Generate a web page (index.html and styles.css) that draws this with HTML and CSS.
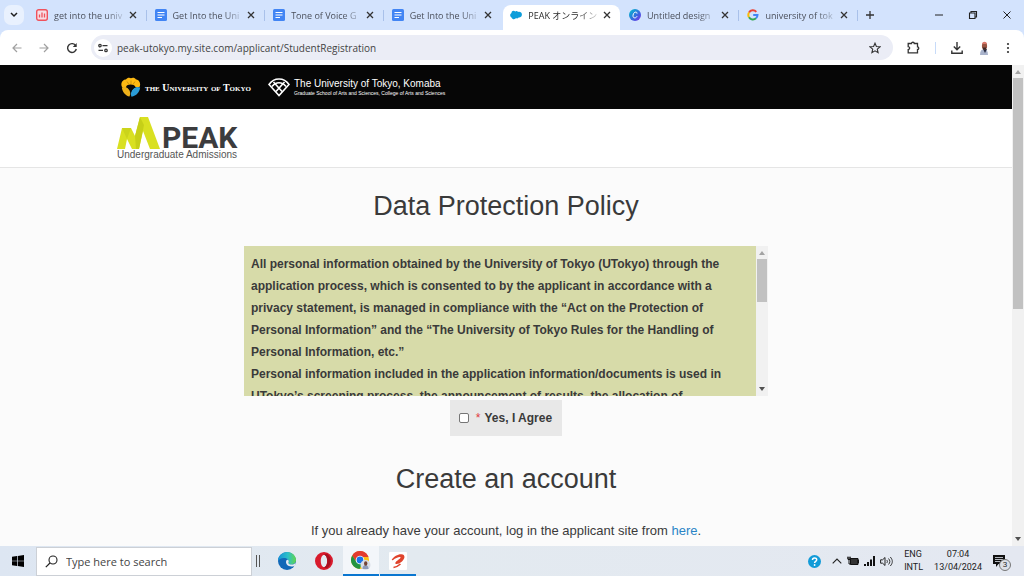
FILE: index.html
```html
<!DOCTYPE html>
<html lang="en">
<head>
    <meta charset="UTF-8">
    <meta name="viewport" content="width=device-width, initial-scale=1.0">
    <title>PEAK Student Registration</title>
    <link rel="stylesheet" href="styles.css">
</head>
<body>
    <!-- Shared shapes -->
    <svg class="sprite" aria-hidden="true">
        <symbol id="close" viewBox="0 0 8 8"><path d="M1 1l6 6M7 1l-6 6" fill="none" stroke="currentColor" stroke-width="1.3"/></symbol>
        <symbol id="doc" viewBox="0 0 12 12"><rect width="12" height="12" rx="1.5" fill="#4285f4"/><path d="M2.500 3.500h7M2.500 6h7M2.500 8.500h4.500" stroke="#fff" stroke-width="1.2"/></symbol>
        <symbol id="up" viewBox="0 0 6 4"><path d="M0 4L3 0l3 4z" fill="currentColor"/></symbol>
        <symbol id="down" viewBox="0 0 6 4"><path d="M0 0l3 4 3-4z" fill="currentColor"/></symbol>
    </svg>

    <!-- Tab strip -->
    <div class="tab-strip">
        <button class="tab-search" aria-label="Search tabs">
            <svg width="8" height="6" viewBox="0 0 8 6"><path d="M1 1l3 3 3-3" fill="none" stroke="#1f1f1f" stroke-width="1.5"/></svg>
        </button>
        <div class="tabs">
            <div class="tab">
                <svg class="favicon" viewBox="0 0 12 12"><rect x=".7" y=".7" width="10.600" height="10.600" rx="2" fill="#f6dfe6" stroke="#f0525c" stroke-width="1.4"/><path d="M3.500 8.500v-3M6 8.500v-5M8.500 8.500v-4" stroke="#f0525c" stroke-width="1.3"/></svg>
                <span class="tab-title">get into the univ</span>
                <button class="tab-close" aria-label="Close tab"><svg width="8" height="8"><use href="#close"/></svg></button>
            </div>
            <div class="tab">
                <svg class="favicon"><use href="#doc"/></svg>
                <span class="tab-title">Get Into the Uni</span>
                <button class="tab-close" aria-label="Close tab"><svg width="8" height="8"><use href="#close"/></svg></button>
            </div>
            <div class="tab">
                <svg class="favicon"><use href="#doc"/></svg>
                <span class="tab-title">Tone of Voice G</span>
                <button class="tab-close" aria-label="Close tab"><svg width="8" height="8"><use href="#close"/></svg></button>
            </div>
            <div class="tab before-active">
                <svg class="favicon"><use href="#doc"/></svg>
                <span class="tab-title">Get Into the Uni</span>
                <button class="tab-close" aria-label="Close tab"><svg width="8" height="8"><use href="#close"/></svg></button>
            </div>
            <div class="tab active">
                <svg class="favicon" viewBox="0 0 12 12"><path d="M1.500 8.500C-.3 7.500-.2 4.800 1.500 4 1.300 1.800 4 1 5.200 2.600 6.200 1.500 7.600 1.900 8 3c2-.7 4 .6 3.900 2.700-.1 2-1.700 3-3.300 2.700-.6 1.100-1.900 1.200-2.600.7C5 10.900 2.200 10.500 1.500 8.500z" fill="#0d9dda"/></svg>
                <span class="tab-title">PEAK オンライン申</span>
                <button class="tab-close" aria-label="Close tab"><svg width="8" height="8"><use href="#close"/></svg></button>
            </div>
            <div class="tab">
                <svg class="favicon" viewBox="0 0 12 12"><defs><linearGradient id="canva" x1="0" y1="0" x2="1" y2="1"><stop offset="0" stop-color="#00c4cc"/><stop offset=".5" stop-color="#2e74dd"/><stop offset="1" stop-color="#7d2ae8"/></linearGradient></defs><circle cx="6" cy="6" r="6" fill="url(#canva)"/><path d="M8 4.600C8.300 2.500 5.500 2.600 4.500 4.700c-1 2-.5 4.200 1.200 4.200 1 0 1.900-.7 2.400-1.600" fill="none" stroke="#fff"/></svg>
                <span class="tab-title">Untitled design</span>
                <button class="tab-close" aria-label="Close tab"><svg width="8" height="8"><use href="#close"/></svg></button>
            </div>
            <div class="tab">
                <svg class="favicon" viewBox="0 0 12 12"><g fill="none" stroke-width="2"><path d="M2 3.600A4.500 4.500 0 0 1 9.300 2.900" stroke="#ea4335"/><path d="M2 8.200a4.500 4.500 0 0 1 0-4.600" stroke="#fbbc05"/><path d="M9 9.300a4.500 4.500 0 0 1-7-1.100" stroke="#34a853"/><path d="M6.200 6h4.300a4.500 4.500 0 0 1-1.500 3.300" stroke="#4285f4"/></g></svg>
                <span class="tab-title">university of tok</span>
                <button class="tab-close" aria-label="Close tab"><svg width="8" height="8"><use href="#close"/></svg></button>
            </div>
        </div>
        <button class="new-tab" aria-label="New tab"><svg width="8" height="8" viewBox="0 0 8 8"><path d="M4 0v8M0 4h8" stroke="#333" stroke-width="1.300"/></svg></button>
        <div class="window-controls">
            <button aria-label="Minimize"><svg width="10" height="10" viewBox="0 0 10 10"><path d="M1 5h8" stroke="#222"/></svg></button>
            <button aria-label="Restore"><svg width="10" height="10" viewBox="0 0 10 10"><path d="M1.500 3h5.500v5.500H1.500zM3 3V1.500h5.500V7H7" fill="none" stroke="#222" stroke-width="1.100"/></svg></button>
            <button aria-label="Close"><svg width="10" height="10" viewBox="0 0 10 10"><path d="M1.500 1.500l7 7M8.500 1.500l-7 7" stroke="#222"/></svg></button>
        </div>
    </div>

    <!-- Toolbar -->
    <div class="toolbar">
        <div class="nav-buttons">
            <button aria-label="Back"><svg width="10" height="10" viewBox="0 0 10 10"><path d="M9.500 5H1M5 1L1 5l4 4" fill="none" stroke="#a0a0a0" stroke-width="1.200"/></svg></button>
            <button aria-label="Forward"><svg width="10" height="10" viewBox="0 0 10 10"><path d="M.5 5H9M5 1l4 4-4 4" fill="none" stroke="#a0a0a0" stroke-width="1.200"/></svg></button>
            <button aria-label="Reload"><svg width="12" height="12" viewBox="0 0 12 12"><path d="M9.800 3.800A4.400 4.400 0 1 0 10.300 7" fill="none" stroke="#333" stroke-width="1.400"/><path d="M10.700 1v4H6.800z" fill="#333"/></svg></button>
        </div>
        <div class="omnibox">
            <button class="site-info" aria-label="Site information"><svg width="10" height="10" viewBox="0 0 10 10"><g fill="none" stroke="#333" stroke-width="1.300"><circle cx="2" cy="2.600" r="1.200"/><path d="M4.500 2.600H9.500M.5 7.400h4.500"/><circle cx="8" cy="7.400" r="1.200"/></g></svg></button>
            <input class="url" type="text" aria-label="Address" value="peak-utokyo.my.site.com/applicant/StudentRegistration">
            <button class="star" aria-label="Bookmark"><svg width="12" height="12" viewBox="0 0 12 12"><path d="M6 1.200l1.400 3.300 3.600.3-2.700 2.400.8 3.500L6 8.800l-3.100 1.900.8-3.500L1 4.800l3.600-.3z" fill="none" stroke="#333" stroke-width="1.100"/></svg></button>
        </div>
        <div class="toolbar-actions">
            <button aria-label="Extensions"><svg width="13" height="13" viewBox="0 0 13 13"><path d="M1.200 2.500h3.300C4.500.8 7.300.8 7.300 2.500h3.200v3.300c1.700 0 1.700 2.700 0 2.700v3.300H1.200V8.600c2-.2 2-2.800 0-3z" fill="none" stroke="#333" stroke-width="1.300"/></svg></button>
            <span class="toolbar-divider"></span>
            <button aria-label="Downloads"><svg width="12" height="12" viewBox="0 0 12 12"><path d="M6 0v7.500M2.800 4.500L6 7.700l3.200-3.200M.8 8.500v2.700h10.400V8.500" fill="none" stroke="#333" stroke-width="1.400"/></svg></button>
            <button aria-label="Profile"><svg width="14" height="14" viewBox="0 0 14 14"><path d="M3 14c0-4 1.500-6 4-6s4 2 4 6z" fill="#a9b3cb"/><path d="M6 8l2 4 2-4z" fill="#24283c"/><ellipse cx="7.500" cy="5" rx="2.600" ry="3.600" fill="#9a5542"/><path d="M5 3c.3-3 4.700-3 5 0z" fill="#d9776a"/><path d="M5.500 6.500h4l-1 2h-2z" fill="#3a2826"/></svg></button>
            <button aria-label="Menu"><svg width="4" height="12" viewBox="0 0 4 12"><g fill="#333"><circle cx="2" cy="2" r="1.100"/><circle cx="2" cy="6" r="1.100"/><circle cx="2" cy="10" r="1.100"/></g></svg></button>
        </div>
    </div>

    <!-- Page -->
    <div class="viewport">
        <div class="page">
            <div class="university-bar">
                <a class="utokyo" href="#">
                    <svg width="20" height="20" viewBox="0 0 20 20"><path d="M1 10C-1 6 2 2.500 5 2.500 6 .5 8.500.3 10 1.200c1.500-1 4.200-.6 5 1.300 3 0 5.300 4 3.500 7.500L13 10H7z" fill="#fdb913"/><path d="M.8 10.500C1.500 15 4.500 19 8.500 19.500c1.500-3 .8-6-1.500-8C5.300 9.800 3 9.300.8 10.500z" fill="#eeb01a"/><path d="M19.200 10.500C18.500 15 15.500 19 10.500 19.700c-1.300-2.500-.7-6 1.800-8 2-1.700 4.700-2.200 6.900-1.200z" fill="#2a9bd6"/><path d="M10 3.500v4M6 4.500l2 3M14 4.500l-2 3" stroke="#b8830a" stroke-width=".7"/><path d="M5 10C6 6.800 13 6.800 14.500 10 12 11.500 10.500 13 10 16 9.300 13 8.500 11 5 10z" fill="#0a0a0a"/></svg>
                    <span class="utokyo-name">the University of Tokyo</span>
                </a>
                <a class="komaba" href="#">
                    <svg width="22" height="20" viewBox="0 0 22 20"><g fill="none" stroke="#fff" stroke-width="1.600"><path d="M1 7.500C6 .2 16 .2 21 7.500L11 18.500z"/><path d="M4 9.500c4-5 10-5 14 0"/><path d="M5.500 5L14 14.500M16.500 5L8 14.500"/></g></svg>
                    <span class="komaba-name">
                        <span class="komaba-title">The University of Tokyo, Komaba</span>
                        <span class="komaba-sub">Graduate School of Arts and Sciences, College of Arts and Sciences</span>
                    </span>
                </a>
            </div>
            <header class="site-header">
                <a class="peak-logo" href="#">
                    <span class="peak-mark">
                        <svg width="43" height="32" viewBox="0 0 43 32">
                            <path d="M0 32L5 11h9l4 8 5-19h8l12 32H33L26 14l-4 18h-7l-5-10-2 10z" fill="#d9e021"/>
                            <path d="M18 19l5-19 4 8-5 24h-3z" fill="#c6cf18"/>
                            <path d="M5 11h9l-4 11z" fill="#cbd41b"/>
                        </svg>
                        <span class="peak-word">PEAK</span>
                    </span>
                    <span class="peak-sub">Undergraduate Admissions</span>
                </a>
            </header>
            <main class="content">
                <h1>Data Protection Policy</h1>
                <div class="policy">
                    <div class="policy-text">
                        <p>All personal information obtained by the University of Tokyo (UTokyo) through the application process, which is consented to by the applicant in accordance with a privacy statement, is managed in compliance with the “Act on the Protection of Personal Information” and the “The University of Tokyo Rules for the Handling of Personal Information, etc.”</p>
                        <p>Personal information included in the application information/documents is used in UTokyo’s screening process, the announcement of results, the allocation of</p>
                    </div>
                    <div class="scrollbar" aria-hidden="true">
                        <svg class="arrow faint"><use href="#up"/></svg>
                        <div class="thumb policy-thumb"></div>
                        <svg class="arrow arrow-down"><use href="#down"/></svg>
                    </div>
                </div>
                <label class="agree"><input type="checkbox"><span class="required">*</span>Yes, I Agree</label>
                <h1>Create an account</h1>
                <p class="login-hint">If you already have your account, log in the applicant site from <a href="#">here</a>.</p>
            </main>
        </div>
        <div class="scrollbar" aria-hidden="true">
            <svg class="arrow faint"><use href="#up"/></svg>
            <div class="thumb page-thumb"></div>
            <svg class="arrow arrow-down"><use href="#down"/></svg>
        </div>
    </div>

    <!-- Taskbar -->
    <div class="taskbar">
        <button class="start" aria-label="Start"><svg width="12" height="12" viewBox="0 0 12 12"><path d="M0 1.700L5 1v4.700H0zM5.700.9L12 0v5.700H5.700zM0 6.300h5V11l-5-.7zM5.700 6.300H12V12l-6.300-.9z" fill="#000"/></svg></button>
        <label class="search">
            <svg width="13" height="13" viewBox="0 0 13 13"><circle cx="8" cy="5" r="4" fill="none" stroke="#222" stroke-width="1.100"/><path d="M5 8L.8 12.200" stroke="#222" stroke-width="1.200"/></svg>
            <input type="text" placeholder="Type here to search" aria-label="Search">
        </label>
        <span class="grip"></span>
        <div class="apps">
            <button aria-label="Edge"><svg width="18" height="18" viewBox="0 0 18 18"><defs><linearGradient id="edge" x1="0" y1="0" x2="1" y2="0"><stop offset="0" stop-color="#1691d8"/><stop offset=".55" stop-color="#2cc0c8"/><stop offset="1" stop-color="#62d64a"/></linearGradient></defs><circle cx="9" cy="9" r="9" fill="#1268b8"/><path d="M0 9C0 3.500 4.500 0 9 0c5.500 0 9 4 9 8 0 3-2.500 4.500-5 4.500-2 0-3-.8-2.500-1.700C11.500 8 9 5.800 6 6 3 6.200.5 7.500 0 9z" fill="url(#edge)"/><path d="M8.300 8.500c.8-1.300 2.500-.8 2.500.8 0 .8-.6 1.200-.3 2 .4 1 1.700 1.300 3 1.300 2 0 3.500-.9 4.200-2.100L17 13.500c-1 .7-2 1-3.500 1-3.700 0-6.400-2.800-5.200-6z" fill="#e5ebf2"/></svg></button>
            <button aria-label="Opera"><svg width="18" height="18" viewBox="0 0 18 18"><path fill-rule="evenodd" d="M9 0a9 9 0 1 0 0 18A9 9 0 0 0 9 0zm0 3c2 0 3.200 2.700 3.200 6S11 15 9 15 5.800 12.300 5.800 9 7 3 9 3z" fill="#d81b2c"/><path d="M12 1.800c5 3.500 5 10.900 0 14.400-1 .2-2-.2-3-1.200 2 0 3.200-2.700 3.200-6S11 3 9 3c1-1 2-1.400 3-1.200z" fill="#a80f20"/></svg></button>
            <button class="open current" aria-label="Chrome"><svg width="20" height="20" viewBox="0 0 20 20"><circle cx="9" cy="9" r="9" fill="#fbc116"/><path d="M1.200 4.500A9 9 0 0 1 16.800 4.500L17.500 6H9L5.400 11z" fill="#e33b2e"/><path d="M1.200 4.500A9 9 0 0 0 8.500 18L12 11H5.500z" fill="#229342"/><circle cx="9" cy="9" r="4.300" fill="#fff"/><circle cx="9" cy="9" r="3.400" fill="#1a73e8"/><circle cx="14.500" cy="14" r="5" fill="#d9dde6"/><path d="M11.500 18c0-3 1.500-4 3-4s3 1 3 4z" fill="#8e9ab8"/><ellipse cx="14.700" cy="12.500" rx="1.700" ry="2.300" fill="#744335"/></svg></button>
            <button class="open" aria-label="Airtel"><svg width="18" height="18" viewBox="0 0 18 18"><rect width="18" height="18" rx="1" fill="#fff"/><path d="M2.800 7.500C5 4.500 9 2 12.500 2.300c4 .4 3.800 4.200.5 7.200-2.500 2.300-5.500 3-6.500 2.200-.8-.8.500-2.200 2-3.300C10 7.200 11.800 6 11.500 5.200 11 4.300 6 6 4.500 7.800c-.6.800-1.900.5-1.700-.3z" fill="#e0442c"/><path d="M4.500 15.500c2.500-.4 5-1.700 7-3.500" fill="none" stroke="#e0442c" stroke-width="1.500"/></svg></button>
        </div>
        <div class="tray">
            <svg width="13" height="13" viewBox="0 0 13 13"><circle cx="6.500" cy="6.500" r="6.500" fill="#129bd8"/><path d="M4.500 5c0-2.700 4.200-2.600 4.200-.2C8.700 6.300 6.600 6.300 6.600 8" fill="none" stroke="#fff" stroke-width="1.500"/><circle cx="6.600" cy="10" r=".9" fill="#fff"/></svg>
            <div class="tray-icons">
                <svg width="10" height="6" viewBox="0 0 10 6"><path d="M.7 5.300L5 1l4.300 4.300" fill="none" stroke="#222" stroke-width="1.100"/></svg>
                <svg width="12" height="10" viewBox="0 0 12 10"><path d="M3.500 2.500h7.500v6H3.500zM11 4.200h1v2.500h-1z" fill="#333" stroke="#111"/><path d="M0 2h4M1 .5V3.500h2V.5M2 3.500V8h1.500" fill="none" stroke="#111"/></svg>
                <svg width="11" height="10" viewBox="0 0 11 10"><path d="M0 8h2v2H0zM3 6h2v4H3zM6 3.500h2V10H6zM9 0h2v10H9z" fill="#111"/></svg>
                <svg width="13" height="11" viewBox="0 0 13 11"><path d="M.6 3.800h2L5 1.500v8L2.600 7.200h-2z" fill="none" stroke="#222"/><path d="M6.700 4c.9 1 .9 2 0 3M8.500 2.500c1.800 2 1.800 4 0 6M10.300 1c2.700 3 2.700 6 0 9" fill="none" stroke="#222" stroke-width=".9"/></svg>
            </div>
            <span class="tray-text">ENG<br>INTL</span>
            <span class="tray-text clock">07:04<br>13/04/2024</span>
            <button class="notifications" aria-label="Notifications"><svg width="12" height="12" viewBox="0 0 12 12"><path d="M0 0h12v9H5.500L3 12V9H0z" fill="#111"/><path d="M2 2.500h8M2 4.500h8M2 6.500h5" stroke="#dfe4ec" stroke-width=".8"/></svg><span class="badge">3</span></button>
        </div>
    </div>
</body>
</html>
```

FILE: styles.css
```css
:root {
    --strip-color: #d3e3fd;
    --text-color: #3a3a3a;
    --link-color: #2a84c6;
    --policy-color: #d7dba9;
    --track-color: #f1f1f1;
    --ui-font: 'Open Sans', 'Noto Sans CJK JP', sans-serif;
}

* {
    margin: 0;
    padding: 0;
    box-sizing: border-box;
}

body {
    display: flex;
    flex-direction: column;
    height: 100vh;
    overflow: hidden;
    background-color: var(--strip-color);
    font-family: 'Liberation Sans', Arial, sans-serif;
    color: var(--text-color);
}

button {
    display: flex;
    align-items: center;
    justify-content: center;
    border: none;
    background: none;
    color: inherit;
}

svg {
    flex: none;
    display: block;
}

input {
    border: none;
    outline: none;
    background: none;
    font-family: var(--ui-font);
}

a {
    color: inherit;
    text-decoration: none;
}

.sprite {
    position: absolute;
    width: 0;
    height: 0;
}

/* Tab strip */
.tab-strip {
    display: flex;
    align-items: center;
    height: 30px;
    flex: none;
    font-family: var(--ui-font);
}

.tab-search {
    width: 20px;
    height: 20px;
    margin: 0 4px;
    border-radius: 7px;
    background-color: #e9f1fe;
}

.tabs {
    display: flex;
    flex: 0 1 830px;
    align-self: stretch;
    min-width: 0;
}

.tab {
    display: flex;
    align-items: center;
    flex: 1;
    min-width: 0;
    padding: 0 10px 0 8px;
    position: relative;
    color: #4a4f5a;
}

.tab::after {
    content: '';
    position: absolute;
    right: 0;
    top: 10px;
    width: 1px;
    height: 11px;
    background-color: #a9c1ea;
}

.tab.active::after,
.tab.before-active::after {
    display: none;
}

.tab.active {
    color: #2b2b2b;
}

.tab.active::before {
    content: '';
    position: absolute;
    inset: 5px 1px 0 1px;
    border-radius: 8px 8px 0 0;
    background-color: #fff;
}

.tab.active > * {
    z-index: 1;
}

.favicon {
    width: 12px;
    height: 12px;
    margin-right: 6px;
}

.tab-title {
    flex: 1;
    min-width: 0;
    overflow: hidden;
    white-space: nowrap;
    font-size: 9px;
    mask-image: linear-gradient(to right, #000 75%, rgba(0, 0, 0, 0.2));
}

.tab-close {
    width: 8px;
    margin-left: 6px;
    color: #333;
}

.new-tab {
    width: 24px;
    height: 20px;
}

.window-controls {
    display: flex;
    margin-left: auto;
}

.window-controls button {
    width: 34px;
    height: 30px;
}

/* Toolbar */
.toolbar {
    display: flex;
    align-items: center;
    height: 35px;
    flex: none;
    padding: 0 14px 0 12px;
    border-radius: 8px 8px 0 0;
    background-color: #fff;
}

.nav-buttons {
    display: flex;
    gap: 17px;
    width: 79px;
}

.omnibox {
    display: flex;
    align-items: center;
    flex: 1;
    min-width: 0;
    height: 25px;
    padding: 0 12px 0 3px;
    border-radius: 13px;
    background-color: #ebedf6;
}

.site-info {
    width: 18px;
    height: 18px;
    margin-right: 5px;
    border-radius: 9px;
    background-color: #fff;
}

.url {
    flex: 1;
    min-width: 0;
    font-size: 10px;
    color: #444;
}

.toolbar-actions {
    display: flex;
    align-items: center;
    justify-content: space-between;
    width: 117px;
    padding-left: 14px;
}

.toolbar-divider {
    width: 1px;
    height: 12px;
    background-color: #c7dbf9;
}

/* Page */
.viewport {
    display: flex;
    flex: 1;
    min-height: 0;
}

.page {
    flex: 1;
    min-width: 0;
    overflow: hidden;
    background-color: #fbfbfb;
}

.university-bar {
    display: flex;
    align-items: center;
    gap: 17px;
    height: 44px;
    padding-left: 121px;
    background-color: #060606;
    color: #fff;
}

.utokyo,
.komaba {
    display: flex;
    align-items: center;
    gap: 4px;
}

.utokyo-name {
    font-family: 'Liberation Serif', 'Times New Roman', serif;
    font-variant: small-caps;
    font-size: 10px;
    font-weight: 700;
    white-space: nowrap;
}

.komaba-name {
    display: flex;
    flex-direction: column;
}

.komaba-title {
    font-size: 10px;
    line-height: 11px;
}

.komaba-sub {
    font-size: 5px;
    line-height: 8px;
}

.site-header {
    padding: 8px 117px 7px;
    border-bottom: 1px solid #e5e5e5;
    background-color: #fff;
}

.peak-logo {
    display: inline-flex;
    flex-direction: column;
}

.peak-mark {
    display: flex;
    align-items: flex-end;
    gap: 2px;
    height: 32px;
}

.peak-word {
    font-family: Roboto, sans-serif;
    font-size: 30px;
    font-weight: 700;
    line-height: 22px;
    color: #3c3c3e;
}

.peak-sub {
    font-size: 10px;
    line-height: 11px;
    color: #555;
}

.content {
    display: flex;
    flex-direction: column;
    align-items: center;
}

h1 {
    margin: 22px 0 24px;
    font-size: 27px;
    font-weight: 400;
    line-height: 32px;
}

.policy {
    display: flex;
    width: 100%;
    max-width: 524px;
    height: 150px;
    background-color: var(--policy-color);
}

.policy-text {
    flex: 1;
    padding: 7px;
    overflow: hidden;
    font-size: 12px;
    font-weight: 700;
    line-height: 22px;
}

.agree {
    display: flex;
    align-items: center;
    height: 36px;
    margin: 4px 0 5px;
    padding: 0 10px 0 9px;
    background-color: #e8e8e8;
    font-size: 12px;
    font-weight: 700;
}

.agree input {
    appearance: none;
    width: 10px;
    height: 10px;
    margin-right: 7px;
    border: 1px solid #767676;
    border-radius: 2px;
    background-color: #fff;
}

.agree input:checked {
    background-color: var(--link-color);
}

.required {
    margin-right: 4px;
    color: #e0393e;
    font-weight: 400;
}

.login-hint {
    font-size: 13px;
    line-height: 24px;
}

.login-hint a {
    color: var(--link-color);
}

/* Scrollbars */
.scrollbar {
    display: flex;
    flex-direction: column;
    align-items: center;
    width: 12px;
    flex: none;
    padding: 5px 1px;
    background-color: var(--track-color);
}

.arrow {
    width: 6px;
    height: 4px;
    color: #505050;
}

.arrow.faint {
    color: #a3a3a3;
}

.arrow-down {
    margin-top: auto;
}

.thumb {
    width: 100%;
    margin-top: 4px;
    background-color: #c1c1c1;
}

.page-thumb {
    height: 49%;
}

.policy-thumb {
    height: 43px;
}

/* Taskbar */
.taskbar {
    display: flex;
    align-items: center;
    height: 30px;
    flex: none;
    background: linear-gradient(to right, #dde6f2, #e3eaf0 40%, #e4e8f1);
    font-family: var(--ui-font);
    color: #222;
}

.start {
    width: 36px;
    height: 30px;
}

.search {
    display: flex;
    align-items: center;
    gap: 8px;
    width: 216px;
    height: 29px;
    padding-left: 8px;
    border: 1px solid #ccd0d6;
    background-color: #fff;
}

.search input {
    flex: 1;
    min-width: 0;
    font-size: 11px;
}

.search input::placeholder {
    color: #444;
}

.grip {
    width: 4px;
    height: 12px;
    margin: 0 9px 0 4px;
    border: solid #555;
    border-width: 0 1px;
}

.apps {
    display: flex;
    gap: 1px;
}

.apps button {
    width: 36px;
    height: 30px;
    border: solid transparent;
    border-width: 2px 0;
}

.apps .open {
    border-bottom-color: #0a76d0;
}

.apps .current {
    background-color: #f3f6fa;
}

.tray {
    display: flex;
    align-items: center;
    gap: 11px;
    margin-left: auto;
    padding-right: 19px;
}

.tray-icons {
    display: flex;
    align-items: center;
    gap: 5px;
}

.tray-text {
    font-family: Roboto, sans-serif;
    font-size: 9px;
    line-height: 13px;
}

.clock {
    text-align: center;
}

.notifications {
    position: relative;
}

.badge {
    position: absolute;
    left: 6px;
    top: 4px;
    width: 12px;
    height: 12px;
    border: 1px solid #777;
    border-radius: 6px;
    background-color: #dde1e8;
    font-size: 8px;
    line-height: 10px;
}
```
